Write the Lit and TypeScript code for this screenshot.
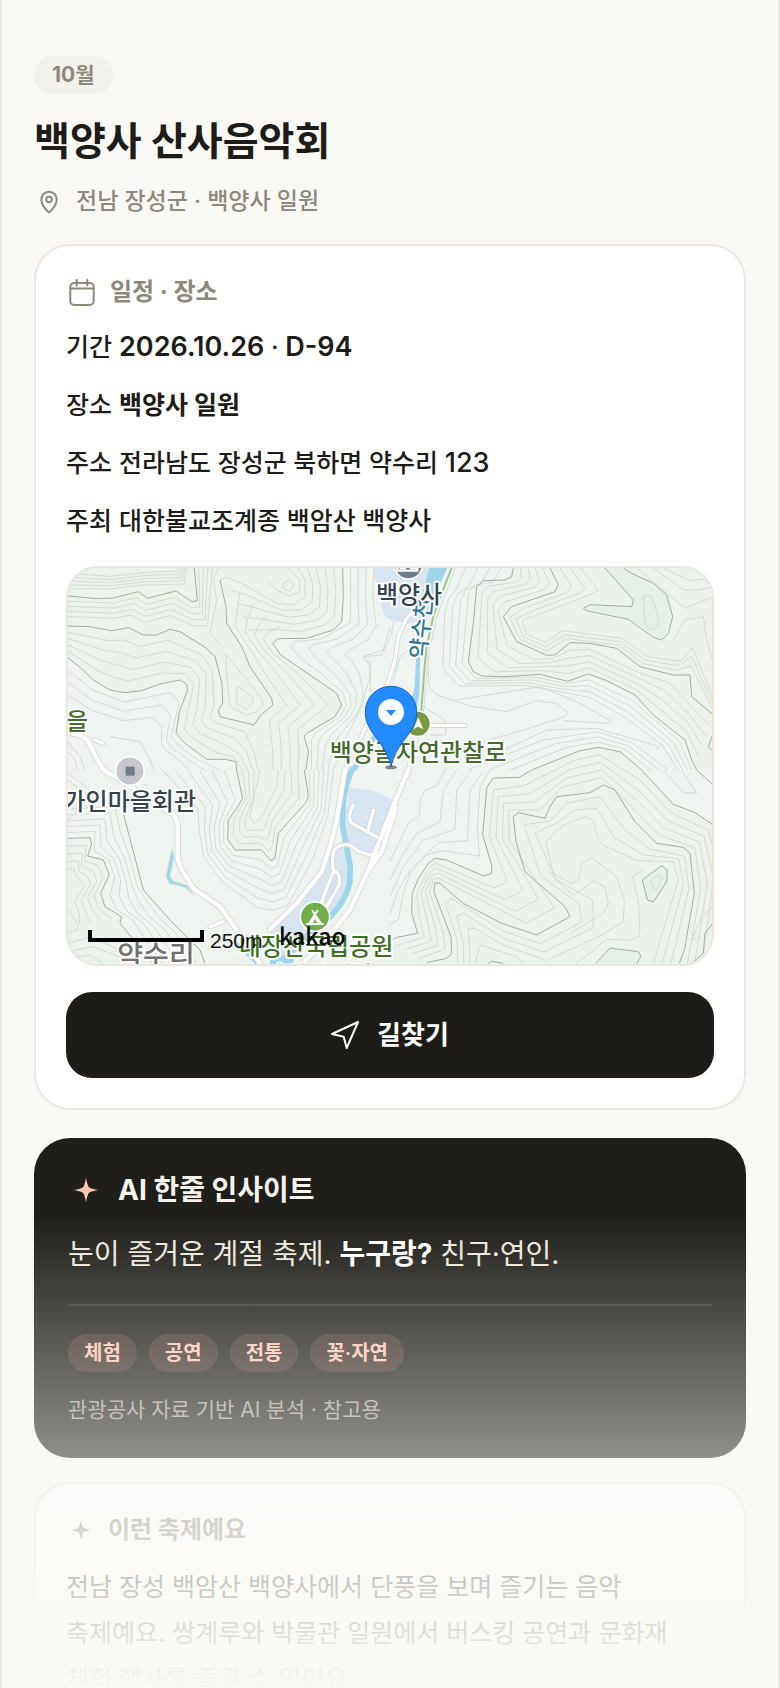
import { LitElement, html, svg, css } from "lit";
import { customElement, property } from "lit/decorators.js";

type Pt = [number, number];

const parse = (s: string): Pt[] => s.trim().split(/\s+/).map((p) => p.split(",").map(Number) as Pt);
const toPath = (pts: Pt[]) => "M" + pts.map((p) => `${p[0].toFixed(1)} ${p[1].toFixed(1)}`).join("L");

/** Spread a polyline over n evenly spaced points. */
function resample(pts: Pt[], n: number): Pt[] {
  const acc = [0];
  for (let i = 1; i < pts.length; i++) {
    acc.push(acc[i - 1] + Math.hypot(pts[i][0] - pts[i - 1][0], pts[i][1] - pts[i - 1][1]));
  }
  const total = acc[acc.length - 1];
  const out: Pt[] = [];
  let j = 1;
  for (let i = 0; i < n; i++) {
    const d = (total * i) / (n - 1);
    while (j < pts.length - 1 && acc[j] < d) j++;
    const t = (d - acc[j - 1]) / (acc[j] - acc[j - 1] || 1);
    out.push([pts[j - 1][0] + (pts[j][0] - pts[j - 1][0]) * t, pts[j - 1][1] + (pts[j][1] - pts[j - 1][1]) * t]);
  }
  return out;
}

/** Contours lying between two given ones. */
function between(a: string, b: string, n: number): string {
  let p = parse(a);
  let q = parse(b);
  if (p.length !== q.length) {
    p = resample(p, 32);
    q = resample(q, 32);
  }
  let d = "";
  for (let k = 1; k <= n; k++) {
    const t = k / (n + 1);
    d += toPath(p.map((v, i) => [v[0] + (q[i][0] - v[0]) * t, v[1] + (q[i][1] - v[1]) * t] as Pt));
  }
  return d;
}

interface Sheet {
  at: string;
  major: string[];
  minor: string[];
  fills: [string, number][];
}

const sheets: Sheet[] = [
  {
    at: "translate(-8 -8) scale(.333333)",
    major: [
      "24,108 110,116 160,114 235,95 262,115 348,93 395,125 412,122 403,24",
      "24,293 60,322 100,360 150,390 195,398 245,392 300,372 360,360 380,372 383,390 358,455 348,520 375,550 440,598 495,598 528,605 530,630",
      "848,24 850,110 845,185 820,210 740,235 655,236 638,250 662,285 750,345 830,400 845,435 825,470 740,520 733,530 745,575 738,630",
      "480,60 498,140 500,190 545,260 570,320 635,415 638,435 600,468 582,495 480,470 475,450 488,430 486,370 465,290 440,265 360,215 330,208 290,225 250,225 205,203 155,212 90,200 24,198",
    ],
    minor: [
      "668,70 690,60 702,75 690,92 672,88 668,70",
      "530,378 575,408 580,425 560,448 530,430 530,378",
      "498,283 605,415 608,435 590,455 560,465 510,440 500,345 498,283",
      "24,545 60,590 75,630",
      "24,575 45,600 52,630",
      "150,530 240,545 270,600 280,630",
      "480,60 500,52 545,70 650,130 700,135 735,110 735,60 715,24",
      "620,60 650,90 690,108 718,95 720,60 695,35 680,24",
      "990,200 970,270 910,290 930,310 930,350 905,440 860,530 820,630",
      "485,258 450,220 470,120 460,60 475,24",
    ],
    fills: [
      ["24,24 848,24 850,110 845,185 820,210 740,235 655,236 638,250 662,285 830,400 845,435 825,470 740,520 733,530 745,575 738,630 530,630 528,605 440,598 348,520 358,455 383,390 360,360 195,398 100,360 24,293", 0],
    ],
  },
  {
    at: "translate(322 -8) scale(.333333)",
    major: [
      "370,24 365,50 345,60 280,62 260,80 250,190 235,305 250,335 275,348 345,350 450,343 533,364 595,342 650,362 735,405 790,465 885,540 905,600 920,630",
      "645,24 730,120 725,140 600,134 580,145 590,152 715,178 790,232 815,240 835,220 848,170 830,105 790,70 725,40 700,24",
      "480,24 505,75 495,95 365,140 340,170 380,245 470,286 495,285 540,248 600,250 680,265 750,320 850,345 900,345 905,410 970,465",
      "425,630 570,572 625,562 690,575 755,630",
      "970,520 955,560 970,575",
    ],
    minor: [
      "110,270 118,380 140,405 240,438 350,455 440,422 500,430 533,458 525,470 400,510 280,545",
      "200,420 450,380 560,425 662,482 655,490 520,482",
      "790,24 880,90 925,90 970,80",
      "740,24 885,145 970,110",
      "820,24 900,62 960,55",
      "760,105 785,110 800,155 808,195 790,210 765,195 760,105",
      "850,240 885,180 940,170 950,240 970,310",
      "300,590 470,510 620,505 740,540 805,560 800,570",
    ],
    fills: [
      ["370,24 345,60 280,62 260,80 235,305 275,348 450,343 533,364 595,342 735,405 885,540 920,630 970,630 970,24", 0],
      ["645,24 730,120 725,140 600,134 580,145 715,178 815,240 848,170 830,105 725,40 700,24", 1],
      ["425,630 570,572 625,562 690,575 755,630", 0],
    ],
  },
  {
    at: "translate(-8 202) scale(.333333)",
    major: [
      "530,0 548,85 530,115 505,150 503,208 525,240 605,240 632,272 645,265 655,190 740,95 745,75 733,0",
      "24,205 90,203 95,220 83,258 130,270 148,315 122,370 135,410 185,440 180,460 230,520 280,580",
      "190,130 250,360 330,450 420,540 435,580",
    ],
    minor: [
      "24,30 60,60 45,130 24,150",
      "24,10 90,60 130,110",
      "24,420 55,465 50,480 24,490",
      "24,520 90,500 180,540",
      "24,545 100,530 200,570",
      "24,565 90,555 130,580",
      "600,0 570,140 580,160 600,150 650,50 655,0",
    ],
    fills: [
      ["530,0 548,85 505,150 503,208 525,240 605,240 632,272 645,265 655,190 745,75 733,0", 0],
      ["24,205 90,203 83,258 130,270 148,315 122,370 135,410 185,440 180,460 280,580 24,580", 0],
    ],
  },
  {
    at: "translate(322 202) scale(.333333)",
    major: [
      "425,0 388,22 310,24 295,45 290,55 278,195 305,285 305,310 280,318 170,270 135,265 115,280 85,325 67,370 65,430 83,490 20,502 0,512",
      "755,0 850,103 915,128 970,165",
      "370,140 385,128 465,145 480,110 500,80 600,68 640,45 675,60 735,155 800,220 880,232 900,250 913,370 890,500 885,535 868,580",
      "370,140 378,215 405,305 525,410 540,440 485,470 440,495 335,460 220,400 150,340 135,338 132,365 183,500 185,550 170,565 110,578",
      "757,330 815,287 832,300 830,335 790,396 772,390 757,330",
      "617,580 660,534 745,545 753,560 740,580",
      "970,458 945,490 940,550 905,580",
      "920,0 970,45",
      "295,580 305,574 340,580",
    ],
    minor: [
      "783,330 805,313 815,325 800,358 785,350 783,330",
      "165,0 140,48 105,60 90,90 88,135 55,160 0,275",
      "200,0 160,60 150,155 80,190 35,260 0,330",
      "245,0 200,60 195,178 100,210 40,290 0,380",
      "275,10 240,60 232,212 145,218 60,300 25,360 0,430",
      "270,258 155,242 110,255 60,310 40,370 25,450 0,462",
      "268,258 262,170 270,50 300,0",
      "760,300 728,320 745,390 750,480 745,500 720,510 650,508 560,580",
      "240,580 238,530 235,475 255,475 340,525 470,572 645,490 700,455 703,390 680,320 605,263 575,280 565,330 545,342 490,310 467,215 520,165 585,140 610,150 625,210 640,225 740,272 850,275 865,330 790,580",
      "470,300 550,377 610,333 645,350 655,400 640,430 540,490",
      "875,0 920,70 880,68 820,0",
      "255,580 270,525 380,560 400,580",
      "970,410 935,440 905,510 935,500",
    ],
    fills: [
      ["425,0 388,22 310,24 290,55 278,195 305,310 280,318 170,270 135,265 85,325 65,430 83,490 0,512 0,580 970,580 970,165 850,103 755,0", 0],
      ["617,580 660,534 745,545 753,560 740,580", 1],
      ["757,330 815,287 832,300 830,335 790,396 772,390", 1],
    ],
  },
];

const ranges: string[] = [
  between("24,28 150,40 280,26 340,24 350,24", "24,98 150,96 240,85 380,82 385,24", 5),
  between(
    "24,108 160,114 235,95 262,115 348,93 395,125 412,122 403,24",
    "24,185 160,190 205,183 250,205 325,185 400,215 450,217 470,24",
    4,
  ),
  between(
    "24,198 155,212 205,203 250,225 330,208 440,265 475,310 488,430 475,455 480,470 582,495 600,560 610,630",
    "24,293 100,360 150,390 195,398 300,372 360,360 383,390 358,455 348,520 375,550 440,598 500,598 530,630",
    4,
  ),
  between(
    "500,60 498,150 500,190 545,260 570,320 638,435 600,468 610,560 615,630",
    "700,235 655,236 638,250 662,285 750,345 845,435 740,520 745,575 738,630",
    4,
  ),
  between(
    "500,52 545,70 600,100 650,130 700,135 735,110 735,60 715,24",
    "580,250 620,245 655,236 740,235 820,210 845,185 850,110 848,24",
    4,
  ),
  between(
    "848,24 850,110 845,185 740,235 655,236 638,250 662,285 750,345 830,400 845,435 825,470 740,520 733,530 738,630",
    "965,24 960,110 975,200 970,240 920,280 910,292 930,310 935,340 930,400 915,440 900,470 860,530 840,570 820,630",
    4,
  ),
  between(
    "24,293 100,360 195,398 360,360 383,390 348,520 375,550 440,598 530,630",
    "24,440 90,480 190,510 250,510 280,540 290,560 300,580 330,600 350,640",
    3,
  ),
];

const rangesEast: string[] = [
  between(
    "370,24 365,50 345,60 280,62 260,80 235,305 275,348 450,343 533,364 595,342 735,405 790,465 885,540 920,630",
    "480,24 505,75 495,95 365,140 340,170 380,245 470,286 495,285 540,248 600,250 750,320 850,345 905,410 970,465",
    4,
  ),
  between(
    "480,24 505,75 495,95 365,140 340,170 380,245 470,286 540,248 680,265 750,320 850,345 900,345 970,465",
    "600,24 665,95 640,105 490,165 415,185 420,215 465,235 510,200 700,225 780,280 880,290 910,235 970,400",
    3,
  ),
  between(
    "370,24 345,60 280,62 260,80 235,305 275,348 450,343 533,364 595,342 735,405 885,540 920,630",
    "190,24 165,90 150,130 140,180 140,330 190,385 400,385 500,402 600,430 700,490 800,560 850,630",
    4,
  ),
  between("425,630 570,572 625,562 690,575 755,630", "170,630 420,530 620,500 740,540 860,630", 3),
];

const rangesSouthWest: string[] = [
  between(
    "530,0 548,85 505,150 503,208 525,240 605,240 632,272 645,265 655,190 740,95 733,0",
    "600,0 590,85 575,140 572,158 580,162 590,160 600,150 605,140 620,110 650,50 655,0",
    3,
  ),
  between(
    "530,0 548,85 505,150 503,208 525,240 605,240 632,272 645,265 655,190 740,95 733,0",
    "270,0 390,120 405,200 420,270 480,350 590,442 640,445 690,430 780,270 815,140 835,0",
    6,
  ),
  between(
    "24,205 90,203 83,258 130,270 148,315 122,370 135,410 185,440 280,580",
    "24,100 180,90 200,170 225,260 250,360 290,400 330,450 380,500 435,580",
    5,
  ),
  between("24,205 90,203 83,258 130,270 148,315 122,370 135,410 185,440", "24,320 30,320 40,335 50,350 55,360 24,400 40,440 24,470", 4),
];

const rangesSouthEast: string[] = [
  between(
    "0,512 83,490 65,430 67,370 115,280 135,265 280,318 305,310 278,195 295,40 388,22 570,-58 625,-68 755,0 850,103 970,165 1010,300 980,580",
    "110,578 185,550 183,500 132,365 135,338 150,340 440,495 540,440 378,215 370,140 465,145 500,80 640,45 735,155 800,220 900,250 913,370 870,580",
    4,
  ),
  between(
    "185,580 183,500 132,365 150,340 335,460 440,495 540,440 525,410 405,305 370,140 465,145 500,80 640,45 735,155 800,220 900,250 913,370 870,580",
    "240,580 238,530 235,475 255,475 340,525 470,572 645,490 650,380 545,342 467,215 520,165 585,140 610,150 640,225 740,272 850,275 865,330 790,580",
    2,
  ),
];

const dense = [ranges, rangesEast, rangesSouthWest, rangesSouthEast];

@customElement("place-map")
export class PlaceMap extends LitElement {
  static styles = css`
    :host {
      display: block;
      border: 2px solid #ebe7e0;
      border-radius: 32px;
      overflow: hidden;
      background: #eff4f1;
    }
    svg {
      display: block;
      width: 100%;
      height: auto;
      font-family: "Noto Sans CJK KR", sans-serif;
      font-weight: 500;
      font-size: 24px;
    }
    .wood { fill: #ebf2ec; }
    .deep { fill: #e6eee8; }
    .minor { fill: none; stroke: #ced7cd; stroke-width: 2.6; }
    .major { fill: none; stroke: #a2af9a; stroke-width: 3; }
    .park { fill: #d8e5f0; }
    .river { fill: none; stroke: #9fd5eb; stroke-linejoin: round; }
    .riverfill { fill: #9fd5eb; }
    .trail { fill: none; stroke: #9fc58e; stroke-width: 6; }
    .casing, .road { fill: none; stroke-linecap: round; stroke-linejoin: round; }
    .casing { stroke: #cfcfd2; }
    .road { stroke: #fff; }
    .w1 { stroke-width: 18; }
    .w1.road { stroke-width: 14; }
    .w2 { stroke-width: 14; }
    .w2.road { stroke-width: 10; }
    .label { paint-order: stroke; stroke: #fff; stroke-width: 4px; stroke-linejoin: round; }
    .mid { text-anchor: middle; }
    .end { text-anchor: end; }
    .green { fill: #456b2d; }
    .slate { fill: #35434f; }
    .water { fill: #2e7896; font-size: 22px; }
    .grey { fill: #707070; font-size: 28px; }
    .forest { fill: #3d7124; }
    .scale { font-family: "Liberation Sans", sans-serif; font-size: 21px; font-weight: 400; fill: #111; }
    .brand { fill: #000; font-size: 23px; }
  `;

  private roads(cls: string) {
    return svg`
      <g transform="translate(242 -8) scale(.333333)">
        <path class="${cls} w2" d="M345 130Q290 165 285 185L265 230L255 300L235 365L185 460L140 560L105 630"/>
        <path class="${cls} w2" d="M360 497H465M325 520L310 560L295 630"/>
      </g>
      <g transform="translate(202 202) scale(.333333)">
        <path class="${cls} w1" d="M225 0L200 150L180 230L155 305L80 400L0 478"/>
        <path class="${cls} w1" d="M415 0L375 95L320 235L295 300L240 420L180 495L100 580"/>
        <path class="${cls} w1" d="M375 95L373 130L335 245L300 295"/>
        <path class="${cls} w2" d="M250 105Q230 140 245 160L320 200M310 120L293 185M310 257L265 245Q235 210 200 232Q182 245 190 303Q212 305 208 345L170 410M190 305L155 395"/>
      </g>
      <g transform="translate(-8 202) scale(.333333)">
        <path class="${cls} w1" d="M24 -112L60 -105L82 -90L105 -45L130 0L200 40L260 85L335 130Q356 145 353 180V260Q355 285 375 315L400 355L480 410L530 480L600 580"/>
        <path class="${cls} w2" d="M105 -90L128 -80M450 470L490 455M255 65V50"/>
      </g>`;
  }

  render() {
    return html`<svg viewBox="0 0 644 396" role="img" aria-label="백양사 일원 지도">
      ${sheets.map(
        (s) => svg`<g transform=${s.at}>
          ${s.fills.map((f) => svg`<path class=${f[1] ? "deep" : "wood"} d=${toPath(parse(f[0])) + "Z"} />`)}
        </g>`,
      )}
      ${sheets.map(
        (s, i) => svg`<g transform=${s.at}>
          <path class="minor" d=${s.minor.map((m) => toPath(parse(m))).join("") + dense[i].join("")} />
          <path class="major" d=${s.major.map((m) => toPath(parse(m))).join("")} />
        </g>`,
      )}
      <g transform="translate(242 -8) scale(.333333)">
        <path class="park" d="M188 24H400L330 192L285 190L245 182L222 165Z"/>
        <path class="riverfill" d="M358 24H412L372 110L345 190L331 280L328 400L320 450H296L314 380L318 300L325 190L340 90Z"/>
        <path class="river" stroke-width="16" d="M310 430L195 530L150 600L130 630"/>
        <path class="trail" d="M425 24L372 160L348 270L333 460"/>
        <path class="minor" d="M436 24L382 165L358 270L340 460M250 185L245 220L215 285L160 290L180 320L182 400M345 230L270 290L250 360M340 440L405 480L408 525H360"/>
      </g>
      <g transform="translate(202 202) scale(.333333)">
        <path class="park" d="M235 55Q310 50 375 95L310 252L262 245L225 215Z"/>
        <path class="park" d="M190 228L238 235L240 350L180 440L60 580H0V480L90 405L155 320Z"/>
        <path class="river" stroke-width="17" d="M250 -8Q225 40 220 100L218 170L232 240L241 290L239 340Q225 400 165 455L110 500L30 580"/>
        <path class="river" stroke-width="15" d="M0 575L70 572M20 545L40 580"/>
      </g>
      <g transform="translate(-8 202) scale(.333333)">
        <path d="M336 235L318 320L328 340L375 352L402 376L378 345L338 332L330 318L342 260Z" fill="#9fd5eb" stroke="#cfe3c9" stroke-width="2"/>
        <path class="river" stroke-width="9" d="M530 520L590 580"/>
      </g>
      ${this.roads("casing")} ${this.roads("road")}
      <g transform="translate(242 -8) scale(.333333)">
        <circle cx="295" cy="14" r="43" fill="#6e7c86" stroke="#fff" stroke-width="5"/>
        <path d="M262 20V32H322V24M272 10V24H288M300 24H320" fill="none" stroke="#fff" stroke-width="7"/>
        <circle cx="323" cy="491" r="38" fill="#77993f" stroke="#fff" stroke-width="4"/>
        <path d="M325 472L340 508L325 500L310 508Z" fill="#fff"/>
      </g>
      <g transform="translate(-8 202) scale(.333333)">
        <circle cx="210" cy="3" r="43" fill="#c6c8cd" stroke="#fff" stroke-width="5"/>
        <rect x="197" y="-10" width="27" height="27" fill="#6e7d86"/>
      </g>
      <g transform="translate(202 202) scale(.333333)">
        <circle cx="135" cy="440" r="44" fill="#6fae4b" stroke="#fff" stroke-width="5"/>
        <path d="M126 420L154 462H162M144 420L116 462H108M116 462H154" fill="none" stroke="#fff" stroke-width="6"/>
        <path fill-rule="evenodd" d="M135 430L156 464H114ZM135 447L126 463H144Z" fill="#fff"/>
      </g>
      <text class="label mid water" transform="translate(361 61) rotate(-84)">약수천</text>
      <text class="label mid slate" x="341" y="35">백양사</text>
      <text class="label mid green" x="350" y="193">백양골자연관찰로</text>
      <text class="label end green" x="20" y="162">을</text>
      <text class="label end slate" x="128" y="242">가인마을회관</text>
      <text class="label mid grey" x="88" y="398">약수리</text>
      <text class="label mid forest" x="248" y="387">내장산국립공원</text>
      <text class="label mid forest" x="250" y="416">가인야영장</text>
      <g transform="translate(242 -8) scale(.333333)">
        <ellipse cx="243" cy="622" rx="18" ry="6" fill="#555" opacity=".7"/>
        <path d="M243 379C200 379 166 413 166 457C166 520 228 545 243 620C258 545 320 520 320 457C320 413 286 379 243 379Z" fill="#238aff" stroke="#1560c8" stroke-width="3"/>
        <circle cx="243" cy="456" r="39" fill="#fff"/>
        <path d="M228 450H258L243 468Z" fill="#238aff"/>
      </g>
      <path d="M22 362V372H134V362" fill="none" stroke="#000" stroke-width="4"/>
      <text class="scale" x="142" y="380">250m</text>
      <text class="brand" x="211" y="377">kakao</text>
    </svg>`;
  }
}

@customElement("spark-icon")
export class SparkIcon extends LitElement {
  @property({ type: Number }) size = 24;
  static styles = css`
    :host { display: block; }
    svg { display: block; margin: auto; fill: currentColor; }
  `;
  render() {
    return html`<svg width=${this.size} height=${this.size} viewBox="0 0 24 24" aria-hidden="true">
      <path d="M12 0C13.200 5.500 14 8.300 15 9.200C16 10.100 18.500 10.900 24 12C18.500 13.100 16 13.900 15 14.800C14 15.700 13.200 18.500 12 24C10.800 18.500 10 15.700 9 14.800C8 13.900 5.500 13.100 0 12C5.500 10.900 8 10.100 9 9.200C10 8.300 10.800 5.500 12 0Z"/>
    </svg>`;
  }
}

@customElement("app-root")
export class AppRoot extends LitElement {
  static styles = css`
    :host {
      display: block;
      position: relative;
      box-sizing: border-box;
      height: 100vh;
      overflow: hidden;
      background: #faf9f5;
      border: solid #ebe9e2;
      border-width: 0 2px;
      color: #1d1c18;
      font-family: "Inter", "Noto Sans CJK KR", sans-serif;
      font-size: 25px;
      line-height: 46px;
      word-break: keep-all;
    }
    * { box-sizing: border-box; }
    h1, h2, p, ul, dl, dd { margin: 0; padding: 0; }
    main { padding: 56px 32px 0; }
    .month {
      width: fit-content;
      padding: 0 18px;
      border-radius: 20px;
      background: #f2f1ec;
      color: #8c887c;
      font-size: 21px;
      font-weight: 700;
      line-height: 38px;
    }
    h1 { margin-top: 22px; font-size: 39px; line-height: 50px; font-weight: 700; }
    .where {
      display: flex;
      align-items: center;
      gap: 12px;
      margin-top: 18px;
      color: #8c887c;
      font-size: 23px;
      line-height: 34px;
      font-weight: 500;
    }
    .line { fill: none; stroke: currentColor; stroke-width: 2; stroke-linecap: round; stroke-linejoin: round; }
    .card {
      margin-top: 26px;
      padding: 30px;
      border: 2px solid #ebe9e2;
      border-radius: 36px;
      background: #fff;
    }
    .about { margin-top: 24px; }
    h2 {
      display: flex;
      align-items: center;
      gap: 12px;
      color: #8c887c;
      font-size: 24px;
      line-height: 32px;
      font-weight: 700;
    }
    .facts { display: grid; gap: 12px; margin: 16px 0 22px; font-weight: 500; }
    .facts div { display: flex; gap: 7px; }
    .num { font-size: 27px; }
    dt { margin: 0; }
    b { font-weight: 700; }
    b.num { font-weight: 600; }
    button {
      display: flex;
      align-items: center;
      justify-content: center;
      gap: 18px;
      width: 100%;
      height: 86px;
      margin-top: 26px;
      padding: 0;
      border: 0;
      border-radius: 26px;
      background: #1d1c18;
      color: #fff;
      font: inherit;
      font-size: 26px;
      font-weight: 700;
    }
    .insight {
      margin-top: 28px;
      padding: 34px;
      border-radius: 36px;
      background: #1f1e1a;
      color: #ebe7dc;
      font-size: 28px;
      line-height: 44px;
    }
    .insight h2 { gap: 14px; color: #f5f3ec; font-size: 28px; line-height: 36px; }
    .insight spark-icon { width: 36px; color: #ffc5b2; }
    .insight b { color: #fff; }
    .insight .quote { margin: 24px 0 28px; }
    .tags {
      display: flex;
      gap: 12px;
      padding-top: 28px;
      border-top: 2px solid rgba(255, 255, 255, 0.1);
      list-style: none;
    }
    .tags li {
      padding: 0 16px;
      border-radius: 20px;
      background: rgba(255, 170, 150, 0.14);
      color: #ffc5b2;
      font-size: 20px;
      line-height: 38px;
      font-weight: 600;
    }
    .note { margin-top: 24px; color: #a09c91; font-size: 21px; line-height: 28px; }
    .about spark-icon { width: 30px; }
    .about p { margin-top: 18px; }
    .fade {
      position: absolute;
      inset: auto 0 0 0;
      height: 28vh;
      margin: 0 -2px;
      background: linear-gradient(rgba(250, 249, 245, 0), #faf9f5);
      pointer-events: none;
    }
  `;

  private facts = [
    { k: "기간", v: html`<b class="num">2026.10.26</b> · <b class="num">D-94</b>` },
    { k: "장소", v: html`<b>백양사 일원</b>` },
    { k: "주소", v: html`전라남도 장성군 북하면 약수리 <span class="num">123</span>` },
    { k: "주최", v: "대한불교조계종 백암산 백양사" },
  ];

  private tags = ["체험", "공연", "전통", "꽃·자연"];

  render() {
    return html`
      <main>
        <header>
          <p class="month">10월</p>
          <h1>백양사 산사음악회</h1>
          <p class="where">
            <svg class="line" width="30" height="26" viewBox="0 0 30 26" aria-hidden="true">
              <path d="M15 24.500C11 21 7.300 16.500 7.300 11.500A7.700 7.700 0 0 1 22.700 11.500C22.700 16.500 19 21 15 24.500Z" />
              <circle cx="15" cy="11.500" r="2.800" />
            </svg>
            전남 장성군 · 백양사 일원
          </p>
        </header>
        <section class="card">
          <h2>
            <svg class="line" width="32" height="32" viewBox="0 0 32 32" aria-hidden="true">
              <rect x="4.300" y="7" width="23.400" height="22" rx="4" />
              <path d="M4.300 12.500H27.700M10.700 4V9.500M21.300 4V9.500" />
            </svg>
            일정 · 장소
          </h2>
          <dl class="facts">
            ${this.facts.map((f) => html`<div><dt>${f.k}</dt><dd>${f.v}</dd></div>`)}
          </dl>
          <place-map></place-map>
          <button type="button">
            <svg class="line" width="28" height="28" viewBox="0 0 28 28" aria-hidden="true">
              <path d="M27 1L15.700 27L12.700 15.700L1 13Z" />
            </svg>
            길찾기
          </button>
        </section>
        <section class="insight">
          <h2><spark-icon size="24"></spark-icon>AI 한줄 인사이트</h2>
          <p class="quote">눈이 즐거운 계절 축제. <b>누구랑?</b> 친구·연인.</p>
          <ul class="tags">
            ${this.tags.map((t) => html`<li>${t}</li>`)}
          </ul>
          <p class="note">관광공사 자료 기반 AI 분석 · 참고용</p>
        </section>
        <section class="card about">
          <h2><spark-icon size="20"></spark-icon>이런 축제예요</h2>
          <p>
            전남 장성 백암산 백양사에서 단풍을 보며 즐기는 음악 축제예요. 쌍계루와 박물관 일원에서 버스킹
            공연과 문화재 체험 행사를 즐길 수 있어요.
          </p>
        </section>
      </main>
      <div class="fade"></div>
    `;
  }
}
